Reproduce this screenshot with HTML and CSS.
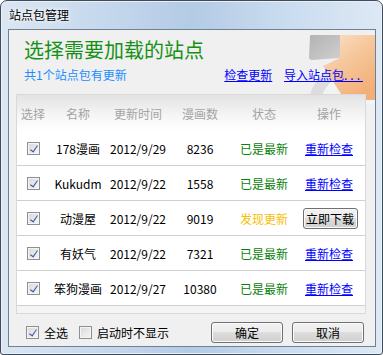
FILE: index.html
```html
<!DOCTYPE html>
<html lang="zh-CN">
<head>
    <meta charset="UTF-8">
    <title>站点包管理</title>
    <link rel="stylesheet" href="styles.css">
</head>
<body>
    <div class="window">
        <div class="titlebar">站点包管理</div>

        <div class="client">
            <!-- фоновая картинка справа сверху -->
            <svg class="deco" width="76" height="74" viewBox="0 0 76 74">
                <defs>
                    <linearGradient id="og" x1="0" y1="0" x2="0.6" y2="1">
                        <stop offset="0" stop-color="#fbe0c2"/>
                        <stop offset="0.5" stop-color="#f8bd86"/>
                        <stop offset="1" stop-color="#f4a05c"/>
                    </linearGradient>
                    <linearGradient id="gg" x1="0" y1="0" x2="1" y2="1">
                        <stop offset="0" stop-color="#a4a4a4"/>
                        <stop offset="1" stop-color="#c8c8c8"/>
                    </linearGradient>
                </defs>
                <circle cx="62" cy="82" r="54" fill="#d9d9d9"/>
                <circle cx="66" cy="84" r="47" fill="#f4f4f4"/>
                <path d="M11 7 Q10 5 13 5 L41 5 L41 28 L13 30 Q10 30 10 27 Z" fill="url(#gg)"/>
                <path d="M41 5 L76 5 L76 70 L46 70 L24 36 L41 28 Z" fill="url(#og)"/>
            </svg>

            <div class="heading">选择需要加载的站点</div>
            <div class="subline">
                <span class="count">共1个站点包有更新</span>
                <span class="links">
                    <a href="#">检查更新</a>
                    <a href="#">导入站点包<span class="dots">...</span></a>
                </span>
            </div>

            <div class="panel">
                <div class="row head">
                    <span>选择</span><span>名称</span><span>更新时间</span><span>漫画数</span><span>状态</span><span>操作</span>
                </div>
                <div class="row">
                    <span><i class="cb on"></i></span><span>178漫画</span><span>2012/9/29</span><span>8236</span>
                    <span class="ok">已是最新</span><span><a href="#">重新检查</a></span>
                </div>
                <div class="row">
                    <span><i class="cb on"></i></span><span>Kukudm</span><span>2012/9/22</span><span>1558</span>
                    <span class="ok">已是最新</span><span><a href="#">重新检查</a></span>
                </div>
                <div class="row">
                    <span><i class="cb on"></i></span><span>动漫屋</span><span>2012/9/22</span><span>9019</span>
                    <span class="new">发现更新</span><span><button class="btn small">立即下载</button></span>
                </div>
                <div class="row">
                    <span><i class="cb on"></i></span><span>有妖气</span><span>2012/9/22</span><span>7321</span>
                    <span class="ok">已是最新</span><span><a href="#">重新检查</a></span>
                </div>
                <div class="row">
                    <span><i class="cb on"></i></span><span>笨狗漫画</span><span>2012/9/27</span><span>10380</span>
                    <span class="ok">已是最新</span><span><a href="#">重新检查</a></span>
                </div>
            </div>

            <div class="footer">
                <label class="opt"><i class="cb on"></i>全选</label>
                <label class="opt"><i class="cb"></i>启动时不显示</label>
                <span class="spacer"></span>
                <button class="btn">确定</button>
                <button class="btn">取消</button>
            </div>
        </div>
    </div>
</body>
</html>
```

FILE: styles.css
```css
body {
    margin: 0;
    font-family: "Noto Sans CJK SC", "Liberation Sans", sans-serif;
    font-size: 12px;
    color: #000;
}

.window {
    width: 383px;
    height: 355px;
    box-sizing: border-box;
    border: 1px solid #3d4b5a;
    border-radius: 7px 7px 3px 3px;
    padding: 0 6px 7px 7px;
    background: linear-gradient(to right, #dbe6f2 0%, #c3d6ec 30%, #b4cbe5 50%, #cadcef 75%, #dde8f4 100%);
    box-shadow: inset 0 0 0 1px #e9f0f8;
}

.titlebar {
    height: 28px;
    line-height: 28px;
    padding-left: 1px;
    font-size: 12px;
    text-shadow: 0 0 6px #fff, 0 0 3px #fff;
}

.client {
    position: relative;
    overflow: hidden;
    height: 318px;
    box-sizing: border-box;
    border: 1px solid #6f8193;
    background: #f0f0f0;
    padding: 8px 0 0 0;
}

.deco {
    position: absolute;
    top: 0;
    right: 0;
    opacity: 0.8;
}

.heading {
    position: relative;
    padding-left: 15px;
    font-size: 20px;
    line-height: 24px;
    color: #169116;
}

.subline {
    position: relative;
    display: flex;
    justify-content: space-between;
    margin-top: 5px;
    padding: 0 12px 0 15px;
    line-height: 16px;
}

.count {
    color: #1a8cff;
}

.links a {
    margin-left: 9px;
}

.dots {
    letter-spacing: 3px;
}

a {
    color: #0000ff;
    text-decoration: underline;
}

.panel {
    position: relative;
    margin: 11px 9px 0 7px;
    border: 1px solid #d9d9d9;
    background: #f4f4f4;
    padding-bottom: 7px;
}

.row {
    display: grid;
    grid-template-columns: 32px 58px 62px 62px 66px 64px;
    align-items: center;
    height: 34px;
    background: #fff;
    border-bottom: 1px solid #d0d0d0;
    text-align: center;
}

.row > span {
    display: flex;
    justify-content: center;
    align-items: center;
    white-space: nowrap;
}

.row.head {
    height: 36px;
    color: #a3a3a3;
    border-bottom: none;
    background: linear-gradient(to bottom, #e3e3e3 0%, #f6f6f6 60%, #fff 100%);
}

.ok {
    color: #0a820a;
}

.new {
    color: #f5c000;
}

.cb {
    display: inline-block;
    width: 11px;
    height: 11px;
    border: 1px solid #8e8f8f;
    background: linear-gradient(135deg, #d8d8d8, #f6f6f6);
    box-shadow: inset 0 0 0 1px #f4f4f4;
    position: relative;
}

.cb.on::after {
    content: "";
    position: absolute;
    left: 4px;
    top: 1px;
    width: 3px;
    height: 7px;
    border: solid #3a56a8;
    border-width: 0 1.5px 1.5px 0;
    transform: rotate(35deg);
}

.btn {
    font-family: inherit;
    font-size: 12px;
    width: 72px;
    height: 21px;
    padding: 0;
    border: 1px solid #707070;
    border-radius: 3px;
    background: linear-gradient(to bottom, #f2f2f2 0%, #ebebeb 49%, #dddddd 50%, #cfcfcf 100%);
    box-shadow: inset 0 0 0 1px #fbfbfb;
    color: #000;
}

.btn.small {
    width: 55px;
    margin-left: 2px;
}

.footer {
    display: flex;
    align-items: center;
    height: 21px;
    margin-top: 8px;
    padding: 0 11px 0 17px;
}

.opt {
    display: flex;
    align-items: center;
    margin-right: 11px;
}

.opt .cb {
    margin-right: 5px;
}

.spacer {
    flex: 1;
}

.footer .btn + .btn {
    margin-left: 9px;
}
```
